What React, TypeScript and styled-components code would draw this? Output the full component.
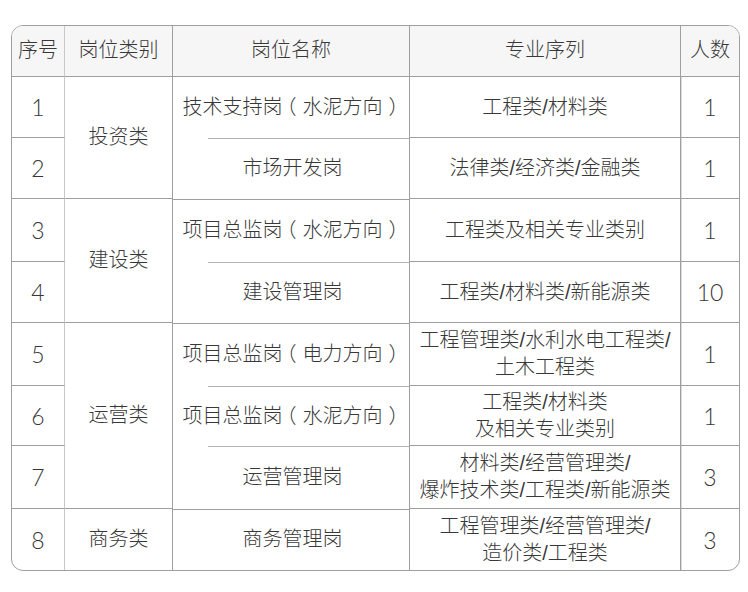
import React from "react";
import styled, { createGlobalStyle, css } from "styled-components";

const GlobalStyle = createGlobalStyle`
  html, body {
    margin: 0;
    padding: 0;
    background: #fff;
  }
  body {
    font-family: "Liberation Sans", "Noto Sans CJK SC", sans-serif;
    color: #333;
  }
`;

type Divider = "none" | "full" | "indent";

interface Job {
  no: number;
  name: string;
  major: string[];
  count: string;
  divider: Divider;
}

interface Group {
  category: string;
  jobs: Job[];
}

// 各类别下的岗位，divider 表示岗位名称单元格顶部的分隔线样式
const groups: Group[] = [
  {
    category: "投资类",
    jobs: [
      { no: 1, name: "技术支持岗（水泥方向）", major: ["工程类/材料类"], count: "1", divider: "none" },
      { no: 2, name: "市场开发岗", major: ["法律类/经济类/金融类"], count: "1", divider: "indent" },
    ],
  },
  {
    category: "建设类",
    jobs: [
      { no: 3, name: "项目总监岗（水泥方向）", major: ["工程类及相关专业类别"], count: "1", divider: "full" },
      { no: 4, name: "建设管理岗", major: ["工程类/材料类/新能源类"], count: "10", divider: "indent" },
    ],
  },
  {
    category: "运营类",
    jobs: [
      { no: 5, name: "项目总监岗（电力方向）", major: ["工程管理类/水利水电工程类/", "土木工程类"], count: "1", divider: "full" },
      { no: 6, name: "项目总监岗（水泥方向）", major: ["工程类/材料类", "及相关专业类别"], count: "1", divider: "indent" },
      { no: 7, name: "运营管理岗", major: ["材料类/经营管理类/", "爆炸技术类/工程类/新能源类"], count: "3", divider: "indent" },
    ],
  },
  {
    category: "商务类",
    jobs: [
      { no: 8, name: "商务管理岗", major: ["工程管理类/经营管理类/", "造价类/工程类"], count: "3", divider: "full" },
    ],
  },
];

const rowHeights = [61, 61, 63, 61, 63, 60, 63, 61];
const LINE = "#9f9f9f";

const Page = styled.div`
  padding: 25px 8px 22px 11px;
`;

const Table = styled.div`
  width: 729px;
  box-sizing: border-box;
  border: 1px solid ${LINE};
  border-radius: 12px;
  overflow: hidden;
  display: grid;
  grid-template-columns: 53px 108px 237px 271px 1fr;
  grid-template-rows: 51px ${rowHeights.map((h) => `${h}px`).join(" ")};
`;

const Cell = styled.div<{ $last?: boolean; $bottom?: boolean; $light?: boolean; $major?: boolean; $num?: boolean }>`
  box-sizing: border-box;
  display: flex;
  flex-direction: column;
  align-items: center;
  justify-content: center;
  text-align: center;
  font-size: 20px;
  line-height: 27px;
  font-weight: 300;
  color: #383838;
  white-space: nowrap;
  border-right: ${(p) => (p.$last ? "none" : `1px solid ${p.$light ? "#c9c9c9" : LINE}`)};
  border-bottom: ${(p) => (p.$bottom ? `1px solid ${LINE}` : "none")};
  ${(p) =>
    p.$major &&
    css`
      box-shadow: 1px 0 0 #dcdcdc;
    `}
  ${(p) =>
    p.$num &&
    css`
      font-family: "Lato", "Liberation Sans", sans-serif;
      font-size: 23px;
      padding-top: 1px;
    `}
`;

const HeadCell = styled(Cell)`
  background: #f6f6f6;
  padding-bottom: 2px;
`;

const NameCell = styled(Cell)<{ $divider: Divider }>`
  display: block;
  padding-left: 3px;
  background: ${(p) =>
    p.$divider === "full"
      ? `linear-gradient(${LINE}, ${LINE}) no-repeat 0 0 / 100% 1px`
      : p.$divider === "indent"
      ? `linear-gradient(#b4b4b4, #b4b4b4) no-repeat 35px 0 / calc(100% - 35px) 1px`
      : "none"};
`;

// 全角括号取半宽字形，再用左右留白把它放到字框中间
const Paren = styled.span<{ $open: boolean }>`
  font-feature-settings: "halt";
  padding-left: ${(p) => (p.$open ? "4px" : "6px")};
  padding-right: ${(p) => (p.$open ? "6px" : "4px")};
`;

const Line = styled.span`
  display: block;
`;

function JobName({ text }: { text: string }) {
  return (
    <>
      {text.split(/([（）])/).map((part, i) =>
        part === "（" || part === "）" ? (
          <Paren key={i} $open={part === "（"}>
            {part}
          </Paren>
        ) : (
          part
        )
      )}
    </>
  );
}

export default function App() {
  let rowStart = 2;
  const total = groups.reduce((n, g) => n + g.jobs.length, 0);

  return (
    <Page>
      <GlobalStyle />
      <Table>
        <HeadCell $bottom $light>序号</HeadCell>
        <HeadCell $bottom>岗位类别</HeadCell>
        <HeadCell $bottom>岗位名称</HeadCell>
        <HeadCell $bottom $major>专业序列</HeadCell>
        <HeadCell $bottom $last>人数</HeadCell>

        {groups.map((g) => {
          const start = rowStart;
          rowStart += g.jobs.length;
          const groupLast = start + g.jobs.length - 1 === total + 1;
          return (
            <React.Fragment key={g.category}>
              <Cell
                $bottom={!groupLast}
                style={{ gridColumn: 2, gridRow: `${start} / span ${g.jobs.length}` }}
              >
                {g.category}
              </Cell>
              {g.jobs.map((j, i) => {
                const row = start + i;
                const isLast = row === total + 1;
                return (
                  <React.Fragment key={j.no}>
                    <Cell $bottom={!isLast} $light $num style={{ gridColumn: 1, gridRow: row }}>
                      {j.no}
                    </Cell>
                    <NameCell $divider={j.divider} style={{ gridColumn: 3, gridRow: row, lineHeight: `${rowHeights[row - 2]}px` }}>
                      <JobName text={j.name} />
                    </NameCell>
                    <Cell $bottom={!isLast} $major style={{ gridColumn: 4, gridRow: row }}>
                      {j.major.map((m) => (
                        <Line key={m}>{m}</Line>
                      ))}
                    </Cell>
                    <Cell $bottom={!isLast} $last $num style={{ gridColumn: 5, gridRow: row }}>
                      {j.count}
                    </Cell>
                  </React.Fragment>
                );
              })}
            </React.Fragment>
          );
        })}
      </Table>
    </Page>
  );
}
